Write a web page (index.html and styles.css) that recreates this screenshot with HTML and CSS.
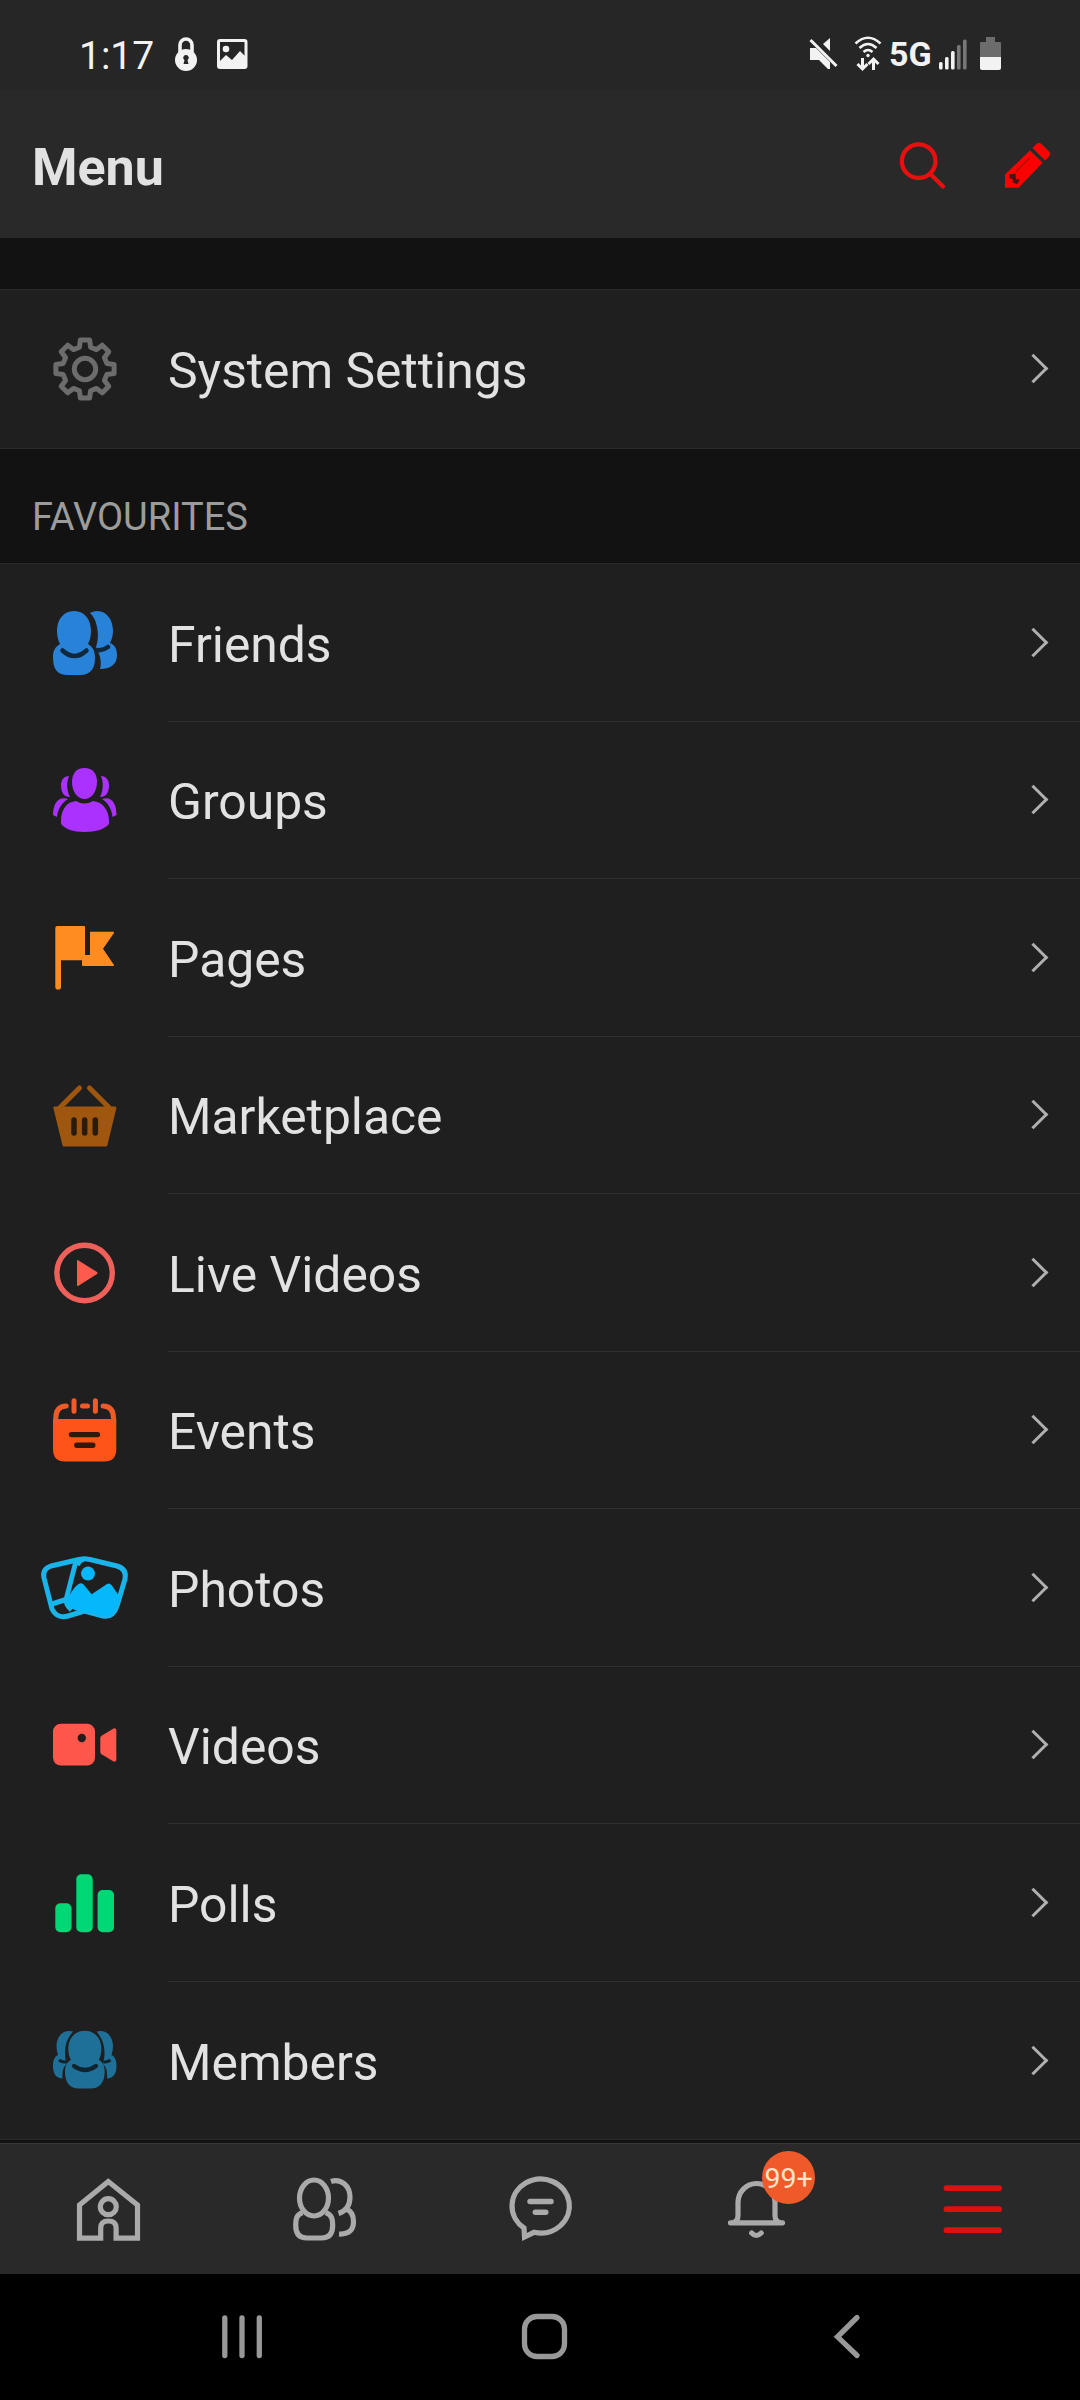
FILE: index.html
```html
<!DOCTYPE html>
<html lang="en">
<head>
    <meta charset="utf-8">
    <title>Menu</title>
    <link rel="stylesheet" href="styles.css">
</head>
<body>
    <div class="status-bar">
        <span class="time">1:17</span>
        <svg class="lock" width="24" height="36" viewBox="0 0 24 36">
            <path d="M6 16V9a6 6 0 0 1 12 0v7" fill="none" stroke="#f2f2f2" stroke-width="3.6"/>
            <circle cx="12" cy="24" r="11" fill="#f2f2f2"/>
            <path d="M12 19a2.700 2.700 0 0 1 1.500 5l1 4h-5l1-4a2.700 2.700 0 0 1 1.500-5z" fill="#262626"/>
        </svg>
        <svg class="picture" width="32" height="36" viewBox="0 0 32 36">
            <rect x="2.500" y="4.500" width="27.500" height="27" rx="1.500" fill="none" stroke="#f2f2f2" stroke-width="3"/>
            <circle cx="10" cy="13" r="3.300" fill="#f2f2f2"/>
            <path d="M2 27l8-8 6 5 8-9 6 6v11H2z" fill="#f2f2f2"/>
        </svg>
        <div class="status-right">
            <svg width="32" height="36" viewBox="0 0 32 36">
                <path d="M2 12h6l14 14v7h-2l-9-9H2zM22 2v13l-7-7z" fill="#f2f2f2"/>
                <path d="M2.500 4l26 26" stroke="#f2f2f2" stroke-width="3"/>
            </svg>
            <svg class="wifi" width="28" height="36" viewBox="0 0 28 36" fill="none" stroke="#f2f2f2" stroke-width="2.600">
                <path d="M1.500 7.500q12.500-11.500 25 0M5.500 12q8.500-8 17 0M9.500 16q4.500-4 9 0"/>
                <circle cx="14" cy="19.500" r="1.700" fill="#f2f2f2" stroke="none"/>
                <path d="M8.500 22v11M3.500 28l5 5 5-5M19.500 34V23M14.500 28l5-5 5 5" stroke-width="3"/>
            </svg>
            <span class="network">5G</span>
            <svg class="signal" width="28" height="36" viewBox="0 0 28 36" fill="#f2f2f2">
                <rect x="0" y="26" width="3.600" height="7.500" rx="1.500"/>
                <rect x="6" y="21" width="3.600" height="12.500" rx="1.500"/>
                <rect x="12" y="15" width="3.600" height="18.500" rx="1.500"/>
                <rect x="18" y="9" width="3.600" height="24.500" rx="1.500" fill="#777"/>
                <rect x="24" y="3.500" width="3.600" height="30" rx="1.500" fill="#777"/>
            </svg>
            <svg class="battery" width="22" height="36" viewBox="0 0 22 36">
                <path d="M6 1h9v5h5q1 0 1 1v14H0V7q0-1 1-1h5z" fill="#6c6c6c"/>
                <path d="M0 21h21v11q0 2-2 2H2q-2 0-2-2z" fill="#f2f2f2"/>
            </svg>
        </div>
    </div>

    <div class="header">
        <h1>Menu</h1>
        <svg width="48" height="48" viewBox="0 0 48 48" fill="none" stroke="#e80f0f" stroke-width="4.300" stroke-linecap="round">
            <circle cx="20.700" cy="20.200" r="16.800"/>
            <path d="M33.500 34l11.500 11.500"/>
        </svg>
        <svg width="48" height="48" viewBox="0 0 48 48" fill="#f00">
            <path d="M1 33.500L26 9.500 38.700 21.700 14.500 46.700H1z"/>
            <path d="M28.500 7L33 2.500q2-1.500 4 0l8.500 8.500q1.500 2 0 4L41 19.500z"/>
            <path d="M5 33.500l6.500-1 .5 5.500 4 .8-3 4.500-4.500-2 .5-3-3.500-1z" fill="#4a1414"/>
            <path d="M12 30.500L25.500 17" stroke="#b00c0c" stroke-width="1.500"/>
        </svg>
    </div>

    <div class="list settings">
        <div class="row">
            <svg class="icon" viewBox="0 0 64 64" fill="none" stroke="#6c6c6c" stroke-width="5" stroke-linejoin="round">
                <path d="M26.400 10.200L27.400 2.900H36.600L37.600 10.200 43.500 12.600 49.300 8.200 55.800 14.700 51.400 20.500 53.800 26.400 61.100 27.400V36.600L53.800 37.600 51.400 43.500 55.800 49.300 49.300 55.800 43.500 51.400 37.600 53.800 36.600 61.100H27.400L26.400 53.800 20.500 51.400 14.700 55.800 8.200 49.300 12.600 43.500 10.200 37.600 2.900 36.600V27.400L10.200 26.400 12.600 20.500 8.200 14.700 14.700 8.200 20.500 12.600z"/>
                <circle cx="32" cy="32" r="10.700"/>
            </svg>
            <div class="label">System Settings</div>
        </div>
    </div>

    <h2>FAVOURITES</h2>

    <div class="list favourites">
        <div class="row">
            <svg class="icon" viewBox="0 0 64 64" fill="#2782d8">
                <path d="M21 0C10 0 4 9 4 20c0 5 1 9 3 13-5 3-7 7-7 13 0 12 4 18 15 18h12c11 0 15-7 15-17 0-7-2-11-7-14 2-4 3-8 3-13C38 9 32 0 21 0z"/>
                <path d="M37 2c2-1 4-2 7-2 10 0 16 9 16 20 0 4-1 8-3 12 5 2 7 6 7 12 0 10-7 14-17 14 1-3 1-8 0-12s-3-7-4-10c2-6 3-14 0-24-1-4-3-7-6-10z"/>
                <path d="M9.500 39.500q12 11 24 0M44.500 39q5 1 10.500-3" fill="none" stroke="#10283d" stroke-width="4.500" stroke-linecap="round"/>
            </svg>
            <div class="label">Friends</div>
        </div>
        <div class="row">
            <svg class="icon" viewBox="0 0 64 64" fill="#ab31ff">
                <path d="M31.500 0C23 0 19 6 19 14c0 9 5 17 12.500 17S44 23 44 14C44 6 40 0 31.500 0z"/>
                <path d="M23 33q8.500 5 17 0c9 1 16 8 16 20v3c-4 5-13 8-24.500 8S12 61 8 56v-3c0-12 6-19 15-20z"/>
                <path d="M16 8c-5 0-8 4-8 9 0 8 3 12 9 12-3-6-4-14-1-21zM48 8c5 0 8 4 8 9 0 8-3 12-9 12 3-6 4-14 1-21zM15 31C5 28 0 36 0 47l4 2C5 40 9 35 15 31zM49 31c10-3 14.500 5 14.500 16l-4 2C58.500 40 55 35 49 31z"/>
            </svg>
            <div class="label">Groups</div>
        </div>
        <div class="row">
            <svg class="icon" viewBox="0 0 64 64" fill="#ff8c20">
                <path d="M4.300 0H31q1 0 1 1v28h5V5.700h23q1.500 0 1 1.300L50 22.700 61 39q.5 1-1 1H30q-1 0-1-1v-4.700H8V61q0 2.600-2.800 2.600T2.300 61V2q0-2 2-2z"/>
            </svg>
            <div class="label">Pages</div>
        </div>
        <div class="row">
            <svg class="icon" viewBox="0 0 64 64" fill="#9f560e">
                <path d="M2 23.500h60q2 0 1.300 2l-9 37q-.3 1-1.500 1h-42q-1 0-1.300-1l-9-37q-.7-2 1.500-2z"/>
                <path d="M26.500 5L7 24.500M36.500 5L56 24.500" stroke="#9f560e" stroke-width="5" stroke-linecap="round"/>
                <path d="M21 37v13M31.700 37v13M42.300 37v13" stroke="#2b1b0c" stroke-width="5.500" stroke-linecap="round"/>
            </svg>
            <div class="label">Marketplace</div>
        </div>
        <div class="row">
            <svg class="icon" viewBox="0 0 64 64" fill="#ff5a4e">
                <circle cx="31.600" cy="32" r="27.700" fill="none" stroke="#f0605a" stroke-width="5.400"/>
                <path d="M24 20q0-1.500 1.500-.5L44 31q1 1 0 2L25.500 44.800q-1.500.7-1.500-.8z"/>
            </svg>
            <div class="label">Live Videos</div>
        </div>
        <div class="row">
            <svg class="icon" viewBox="0 0 64 64" fill="#ff5418">
                <path d="M0 21h63.300v30q0 12.500-12 12.500H12q-12 0-12-12.500z"/>
                <path d="M2.700 24v-3q0-13 10.500-13M60.600 24v-3q0-13-10.500-13M21 2.700v10.500M42.400 2.700v10.500M29.500 8h5" fill="none" stroke="#f05a28" stroke-width="5" stroke-linecap="round"/>
                <path d="M18.500 36.600h26M23.800 47.300h16" stroke="#35180c" stroke-width="5.400" stroke-linecap="round"/>
            </svg>
            <div class="label">Events</div>
        </div>
        <div class="row">
            <svg class="icon" viewBox="0 0 64 64" fill="none" stroke="#18b4ea" stroke-width="5" stroke-linejoin="round">
                <path d="M27 3.300q4.500-1.300 9 0l28 6.700q10 3 8 13l-8 27q-4 12-14 10l-18.500-5L15 60Q4 63-1 53L-9 22Q-11 13-2 10z"/>
                <path d="M23 5L13.500 42q-1.500 6 5 12M31 3.300q-5 .5-6.500 6M-1 48l14-4.500"/>
                <path d="M13 44l9-13 3.500-3q3.500-2 5.500 1l7.700 9.300L54 28q2.500-1.500 4.500 1l9 13-5 11q-4 9-12 7l-19-5-9-.5q-8-4-9.500-10.500z" fill="#04b8fb" stroke="none"/>
                <circle cx="35" cy="17.600" r="7" fill="#04b8fb" stroke="none"/>
            </svg>
            <div class="label">Photos</div>
        </div>
        <div class="row">
            <svg class="icon" viewBox="0 0 64 64" fill="#ff574c">
                <rect y="10.700" width="42" height="41.800" rx="8"/>
                <path d="M47.300 25q0-1.500 1.300-2.300l11.500-7q3.200-1.200 3.200 1.800v29q0 3-3.200 1.800l-11.500-7q-1.300-.8-1.300-2.300z"/>
                <circle cx="28.800" cy="25" r="4.200" fill="#1f1f1f"/>
            </svg>
            <div class="label">Videos</div>
        </div>
        <div class="row">
            <svg class="icon" viewBox="0 0 64 64" fill="#00d876">
                <rect x="2.300" y="32.200" width="16.200" height="29" rx="5"/>
                <rect x="23.300" y="3.200" width="16.400" height="58" rx="5"/>
                <rect x="44.600" y="19" width="16.400" height="42.200" rx="5"/>
            </svg>
            <div class="label">Polls</div>
        </div>
        <div class="row">
            <svg class="icon" viewBox="0 0 64 64" fill="#1f7098">
                <path d="M20 3.500C10 .5 3.500 9 3.500 18c0 3 .5 6 1.500 9-4 2-5 6-5 11 0 8 3 12 9.500 12.500-.5-7 .5-11 4-14.500-3-11-2-23 6.500-32.500zM43.500 3.500C53.500.5 60 9 60 18c0 3-.5 6-1.500 9 4 2 5 6 5 11 0 8-3 12-9.500 12.500.5-7-.5-11-4-14.500 3-11 2-23-6.500-32.500z"/>
                <path d="M6 32q3 2.500 7 2M57.500 32q-3 2.500-7 2" fill="none" stroke="#10242f" stroke-width="3"/>
                <path d="M31.700 2.700c-10 0-16.400 8-16.400 18 0 4 1 8 2.500 11-4 3-5.800 6-5.800 12 0 11 5 16.800 14 16.800h11.500c9 0 14.200-6 14.200-16.800 0-6-1.800-9-5.800-12 1.500-3 2.500-7 2.500-11 0-10-6.400-18-16.700-18z"/>
                <path d="M21 38q11 8 22 0" fill="none" stroke="#10242f" stroke-width="4.300" stroke-linecap="round"/>
            </svg>
            <div class="label">Members</div>
        </div>
    </div>

    <div class="tab-bar">
        <div class="tab">
            <svg class="icon" viewBox="0 0 64 64">
                <path d="M32.300 4.500L3.500 28v33.200h21.200V51q0-7 7.700-7t7.700 7v10.200h21.400V28z"/>
                <circle cx="32.300" cy="29.700" r="8"/>
            </svg>
        </div>
        <div class="tab">
            <svg class="icon" viewBox="0 0 64 64">
                <ellipse cx="22" cy="21" rx="14.500" ry="18"/>
                <path d="M10.500 35.500C4 38 3.700 43 3.700 48c0 9 4 13 11 13h15c7 0 11-4 11-13 0-5-.5-10-7-12.500M39 4.500C49 1 58 9 58 20c0 8-4 14-11.500 16.500M55 32.500c5 2 6.500 6 6.500 12 0 8-4 13-14.500 12.500"/>
            </svg>
        </div>
        <div class="tab">
            <svg class="icon" viewBox="0 0 64 64">
                <path d="M16 51A28.700 27 0 1 1 26 55.300L16.500 60z"/>
                <path d="M22 24.500h21M27.300 35.200h10.500" stroke-width="5.500" stroke-linecap="round"/>
            </svg>
        </div>
        <div class="tab">
            <svg class="icon" viewBox="0 0 64 64" stroke-linecap="round">
                <path d="M6.500 45.800h52M9 45.500q5-1 5-7V25.500a18.500 19 0 0 1 37 0V38.500q0 6 5 7M27.700 56q4.500 5 9.500 0"/>
            </svg>
            <span class="badge">99+</span>
        </div>
        <div class="tab active">
            <svg class="icon" viewBox="0 0 64 64" stroke-linecap="round">
                <path d="M6.500 11.200h52.500M6.500 32.200h52.500M6.500 53.200h52.500" stroke-width="5.800"/>
            </svg>
        </div>
    </div>

    <div class="nav-bar">
        <svg width="48" height="48" viewBox="0 0 48 48"><path d="M6.800 5v37.500M24 5v37.500M41.300 5v37.500"/></svg>
        <svg width="48" height="48" viewBox="0 0 48 48"><rect x="4.500" y="3.500" width="40" height="40" rx="12.500"/></svg>
        <svg width="48" height="48" viewBox="0 0 48 48"><path d="M34 4.500L14.500 23.800 34 42.500"/></svg>
    </div>
</body>
</html>
```
FILE: styles.css
```css
* {
    box-sizing: border-box;
}
body {
    margin: 0;
    width: 1080px;
    height: 2400px;
    display: flex;
    flex-direction: column;
    overflow: hidden;
    background: #121212;
    color: #e2e2e2;
    font-family: Roboto, sans-serif;
}
svg {
    display: block;
    flex-shrink: 0;
    overflow: visible;
}

/* Phone status bar */
.status-bar {
    height: 90px;
    padding: 18px 78px 0 79px;
    display: flex;
    align-items: center;
    background: #262626;
    color: #f2f2f2;
}
.time {
    width: 74px;
    font-size: 39px;
    padding-top: 3px;
}
.lock {
    margin-left: 21px;
}
.picture {
    margin-left: 18px;
}
.status-right {
    margin-left: auto;
    display: flex;
    align-items: center;
}
.wifi {
    margin-left: 14px;
}
.network {
    width: 43px;
    margin-left: 7px;
    font-size: 34px;
    font-weight: bold;
}
.signal {
    margin-left: 7px;
}
.battery {
    margin-left: 13px;
}

.header {
    height: 148px;
    padding: 2px 28px 0 32px;
    display: flex;
    align-items: center;
    gap: 58px;
    background: #292929;
}
.header h1 {
    flex: 1;
    margin: 0;
    padding-top: 5px;
    font-size: 52px;
    font-weight: bold;
}

/* Menu rows */
.list {
    background: #1f1f1f;
    border-top: 1px solid #2a2a2a;
    border-bottom: 1px solid #2a2a2a;
}
.settings {
    margin-top: 51px;
}
.row {
    height: 157.5px;
    padding-left: 52.500px;
    display: flex;
    align-items: center;
}
.settings .row {
    height: 158px;
}
.icon {
    width: 64px;
    height: 64px;
}
.label {
    flex: 1;
    height: 100%;
    margin-left: 51.500px;
    padding: 5px 36px 0 0;
    display: flex;
    align-items: center;
    justify-content: space-between;
    border-bottom: 1px solid #303030;
    font-size: 49.800px;
}
.settings .label {
    padding-top: 3px;
}
.row:last-child .label {
    border-bottom: 0;
}
.label::after {
    content: "";
    width: 18px;
    height: 18px;
    margin-top: -5px;
    border: solid #b0b0b0;
    border-width: 3px 3px 0 0;
    transform: rotate(45deg);
}
h2 {
    height: 114px;
    margin: 0;
    padding: 46px 32px 0;
    color: #9c9c9c;
    font-size: 38px;
    font-weight: normal;
    line-height: 44px;
}

/* Tab bar */
.tab-bar {
    height: 131px;
    margin-top: auto;
    display: grid;
    grid-template-columns: repeat(5, 1fr);
    background: #292929;
    border-top: 1px solid #383838;
}
.tab {
    position: relative;
    display: flex;
    align-items: center;
    justify-content: center;
    fill: none;
    stroke: #aaa;
    stroke-width: 5.200;
}
.active {
    stroke: #dc1212;
}
.badge {
    position: absolute;
    top: 7px;
    left: 114px;
    width: 53px;
    height: 53px;
    border-radius: 50%;
    background: #f05a2a;
    color: #ffe4c8;
    font-size: 28.500px;
    line-height: 56px;
    text-align: center;
}

.nav-bar {
    height: 126px;
    padding: 0 82px 0 91px;
    display: grid;
    grid-template-columns: repeat(3, 1fr);
    align-items: center;
    justify-items: center;
    background: #000;
    fill: none;
    stroke: #989898;
    stroke-width: 5.300;
    stroke-linecap: round;
}
```
